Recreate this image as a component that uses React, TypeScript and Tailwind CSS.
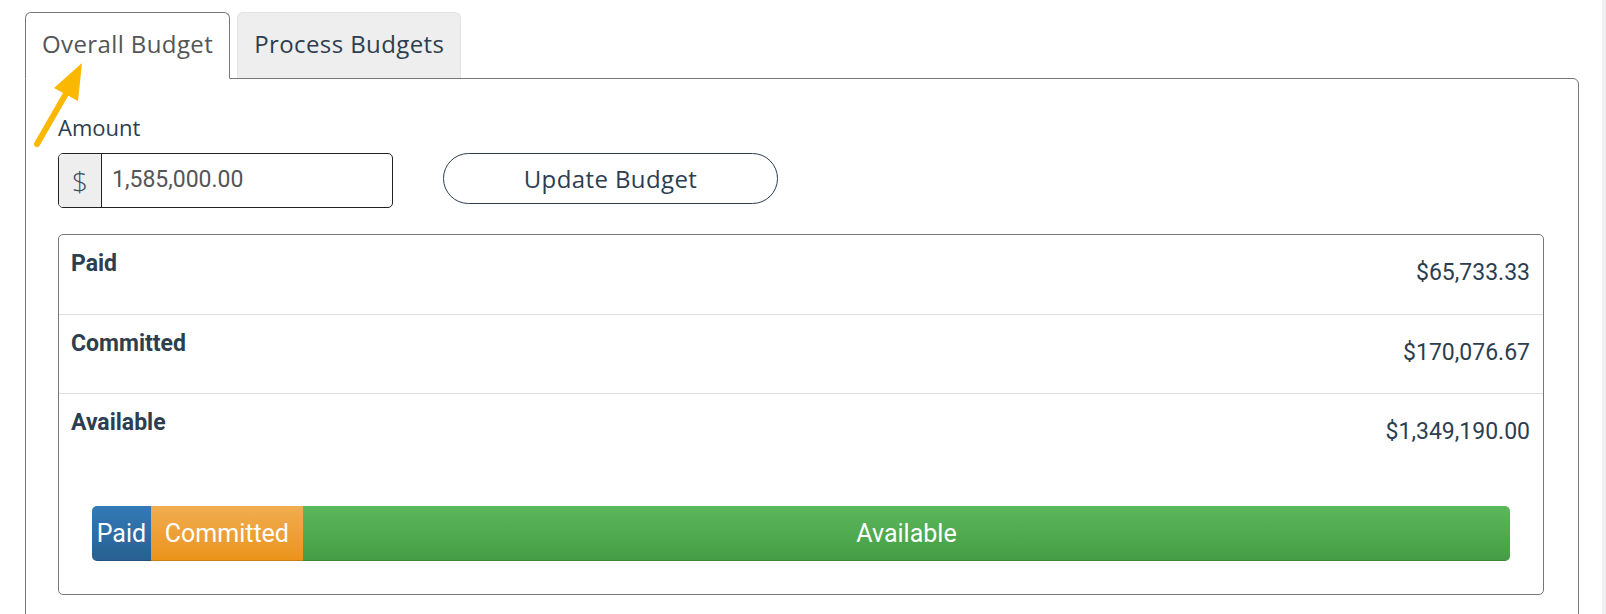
import React from 'react';

const heading = "font-['Open_Sans',sans-serif]";
const body = "font-['Roboto',sans-serif]";

const rows = [
  { label: 'Paid', value: '$65,733.33' },
  { label: 'Committed', value: '$170,076.67' },
];

function StatRow({ label, value, border }: { label: string; value: string; border?: boolean }) {
  return (
    <div
      className={`flex h-[79px] items-start justify-between pl-[12px] pr-[13px] pt-[15px] ${border ? 'border-t border-[#dddddd]' : ''}`}
    >
      <span className="text-[23px] leading-[1.2] font-bold text-[#2c3e50]">{label}</span>
      <span className="mt-[9px] text-[23px] leading-[1.2] text-[#2c3e50]">{value}</span>
    </div>
  );
}

function BudgetBar() {
  const total = 1585000;
  const paid = (65733.33 / total) * 100;
  const committed = (170076.67 / total) * 100;
  return (
    <div className="mx-[33px] mt-[33px] mb-[33px] flex h-[55px] overflow-hidden rounded-[5px] text-[25px] text-white">
      <div
        className="flex items-center justify-center bg-gradient-to-b from-[#337ab7] to-[#286090] shadow-[inset_0_-1px_0_rgba(0,0,0,0.15)]"
        style={{ width: `${paid}%` }}
      >
        Paid
      </div>
      <div
        className="flex items-center justify-center bg-gradient-to-b from-[#f0ad4e] to-[#eb9316] shadow-[inset_0_-1px_0_rgba(0,0,0,0.15)]"
        style={{ width: `${committed}%` }}
      >
        Committed
      </div>
      <div className="flex flex-1 items-center justify-center bg-gradient-to-b from-[#5cb85c] to-[#449d44] shadow-[inset_0_-1px_0_rgba(0,0,0,0.15)]">
        Available
      </div>
    </div>
  );
}

export default function App() {
  return (
    <div className={`relative h-[614px] w-[1606px] overflow-hidden bg-white ${body}`}>
      <div className="absolute top-0 right-0 h-full w-[4px] bg-[#f0f0f4]" />

      <div className="pt-[12px] pl-[25px]">
        {/* tabs */}
        <div className={`relative z-10 -mb-px flex gap-[7px] whitespace-nowrap ${heading} text-[24px] leading-[36px] tracking-[0.4px]`}>
          <div className="h-[67px] rounded-t-[6px] border border-[#777777] border-b-[#ffffff] bg-white px-[16px] pt-[13px] text-[#555555]">
            Overall Budget
          </div>
          <div className="h-[66px] rounded-t-[6px] border border-b-0 border-[#e2e2e2] bg-[#eeeeee] px-[16px] pt-[13px] text-[#2c3e50]">
            Process Budgets
          </div>
        </div>

        {/* panel */}
        <div className="h-[600px] w-[1554px] rounded-tr-[6px] border border-[#777777] pl-[32px] pr-[34px] pt-[32px]">
          <div className={`${heading} text-[22px] leading-[33px] text-[#2c3e50]`}>Amount</div>

          <div className="mt-[9px] flex items-start gap-[50px]">
            <div className="flex h-[55px] w-[335px] overflow-hidden rounded-[5px] border border-[#222222]">
              <div className={`flex w-[43px] items-center justify-center border-r border-[#222222] bg-[#eeeeee] ${heading} text-[28px] font-light text-[#3d4d5c]`}>
                $
              </div>
              <input
                readOnly
                value="1,585,000.00"
                className="min-w-0 flex-1 px-[10px] text-[23px] text-[#555555] outline-none"
              />
            </div>
            <button
              className={`h-[51px] w-[335px] rounded-full border border-[#2c3e50] bg-white ${heading} text-[24px] tracking-[0.4px] text-[#2c3e50]`}
            >
              Update Budget
            </button>
          </div>

          <div className="mt-[26px] rounded-[5px] border border-[#777777]">
            {rows.map((r, i) => (
              <StatRow key={r.label} label={r.label} value={r.value} border={i > 0} />
            ))}
            <div className="border-t border-[#dddddd]">
              <StatRow label="Available" value="$1,349,190.00" />
              <BudgetBar />
            </div>
          </div>
        </div>
      </div>

      {/* annotation arrow */}
      <svg className="absolute top-0 left-0 z-20" width="100" height="160" viewBox="0 0 100 160">
        <line x1="37" y1="144" x2="67" y2="92" stroke="#fbb800" strokeWidth="6" strokeLinecap="round" />
        <polygon points="82,63 54,88 78,101" fill="#fbb800" />
      </svg>
    </div>
  );
}
